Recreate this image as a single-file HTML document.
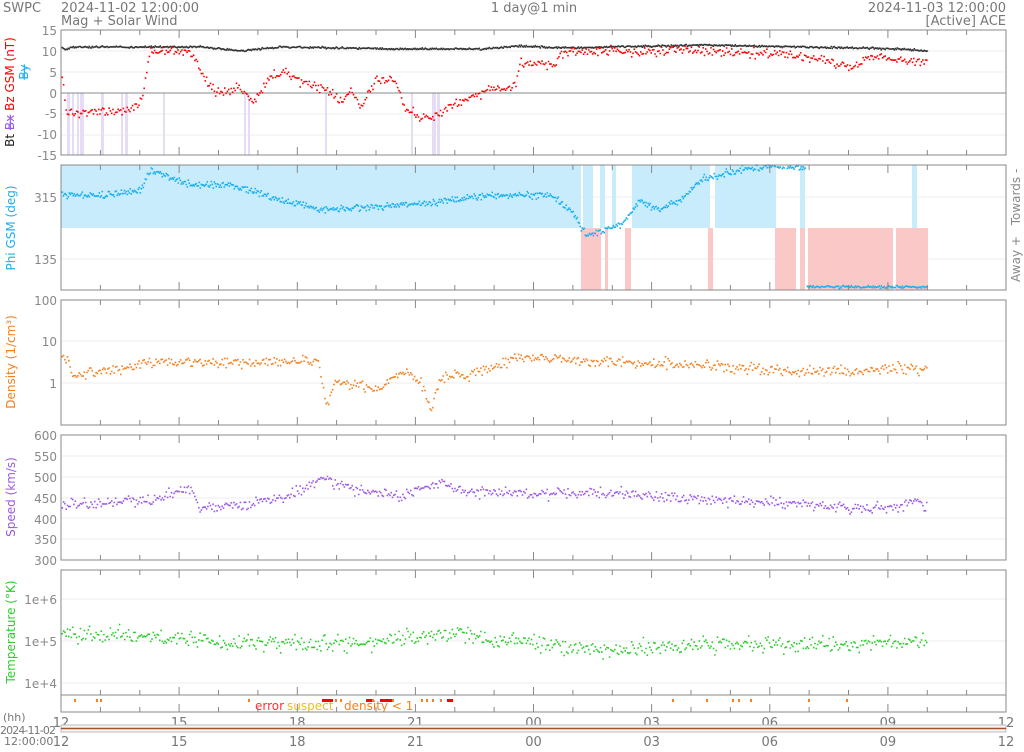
<!DOCTYPE html>
<html><head><meta charset="utf-8"><style>
body{margin:0;background:#fff;width:1024px;height:748px;overflow:hidden;font-family:"DejaVu Sans","Liberation Sans",sans-serif}
svg text{font-family:"DejaVu Sans","Liberation Sans",sans-serif}
</style></head><body>
<svg id="s" width="1024" height="748" xmlns="http://www.w3.org/2000/svg">
<g font-size="13" fill="#777">
<text x="3" y="12">SWPC</text>
<text x="61" y="12">2024-11-02 12:00:00</text>
<text x="61" y="25">Mag + Solar Wind</text>
<text x="534" y="12" text-anchor="middle">1 day@1 min</text>
<text x="1006" y="12" text-anchor="end">2024-11-03 12:00:00</text>
<text x="1006" y="25" text-anchor="end">[Active] ACE</text>
</g>
<g font-size="12" fill="#888" text-anchor="end">
<text x="57" y="35">15</text><text x="57" y="56">10</text><text x="57" y="77">5</text><text x="57" y="98">0</text><text x="57" y="118">-5</text><text x="57" y="139">-10</text><text x="57" y="160">-15</text>
<text x="57" y="202">315</text><text x="57" y="264">135</text>
<text x="57" y="305">100</text><text x="57" y="346">10</text><text x="57" y="388">1</text>
<text x="57" y="440">600</text><text x="57" y="461">550</text><text x="57" y="482">500</text><text x="57" y="503">450</text><text x="57" y="524">400</text><text x="57" y="544">350</text><text x="57" y="565">300</text>
<text x="57" y="604">1e+6</text><text x="57" y="646">1e+5</text><text x="57" y="688">1e+4</text>
</g>
<g font-size="12">
<text transform="translate(14,92) rotate(-90)" text-anchor="middle"><tspan fill="#222">Bt </tspan><tspan fill="#9b59e8" text-decoration="line-through">Bx</tspan><tspan fill="#f00"> Bz GSM (nT)</tspan></text>
<text transform="translate(28,72) rotate(-90)" text-anchor="middle" fill="#1ab0f0" text-decoration="line-through">By</text>
<text transform="translate(15,228) rotate(-90)" text-anchor="middle" fill="#1ab0f0">Phi GSM (deg)</text>
<text transform="translate(15,362) rotate(-90)" text-anchor="middle" fill="#f5801e">Density (1/cm³)</text>
<text transform="translate(15,497) rotate(-90)" text-anchor="middle" fill="#9b59e8">Speed (km/s)</text>
<text transform="translate(15,632) rotate(-90)" text-anchor="middle" fill="#2ccc2c">Temperature (°K)</text>
<text transform="translate(1020,197) rotate(-90)" text-anchor="middle" fill="#888">Towards -</text>
<text transform="translate(1020,259) rotate(-90)" text-anchor="middle" fill="#888">Away +</text>
</g>
<g font-size="12">
<text x="255" y="710" fill="#f33">error</text><text x="287" y="710" fill="#e8c020">suspect</text><text x="344" y="710" fill="#f5801e">density &lt; 1</text>
</g>
<g font-size="13" fill="#777" text-anchor="middle" id="xl"></g>
<g font-size="11" fill="#777"><text x="3" y="721">(hh)</text><text x="0" y="734" textLength="56">2024-11-02</text><text x="4" y="745">12:00:00</text></g>
<g id="d"></g>
</svg>
<script>
var s=1;function r(){s=(s*16807)%2147483647;return s/2147483647;}
function n(){return (r()+r()+r()-1.5)*2/1.5;}
var X0=61,X1=1006,W=X1-X0,HP=W/24;
var out=[];
function interp(k,x){for(var i=0;i<k.length-1;i++){if(x>=k[i][0]&&x<=k[i+1][0]){var t=(x-k[i][0])/(k[i+1][0]-k[i][0]);return k[i][1]+t*(k[i+1][1]-k[i][1]);}}return k[k.length-1][1];}
function rect(x,y,w,h,f,o){out.push('<rect x="'+x+'" y="'+y+'" width="'+w+'" height="'+h+'" fill="'+f+'"'+(o?' '+o:'')+'/>');}
function pts(k,col,noise,step,xe,clip,sz,xs){var p='';sz=sz||1.6;for(var x=(xs||X0)+0.5;x<xe;x+=step){var y=interp(k,x)+n()*noise;if(clip&&(y<clip[0]||y>clip[1]))continue;p+='M'+x.toFixed(1)+' '+y.toFixed(1)+'h'+sz;}out.push('<path d="'+p+'" stroke="'+col+'" stroke-width="'+sz+'"/>');}
var panels=[[30,155],[165,290],[300,425],[435,560],[570,695]];
function gl(y){out.push('<line x1="61" x2="1006" y1="'+y+'" y2="'+y+'" stroke="#eee"/>');}
[51,72,114,135].forEach(gl);[197,259].forEach(gl);[341,383].forEach(gl);[456,477,498,518,539].forEach(gl);[599,641,683].forEach(gl);
[[67,3],[72,2],[77,2],[80,4],[101,3],[121,2],[125,3],[163,2],[244,2],[248,2],[325,2],[432,4],[437,3],[411,2]].forEach(function(b){rect(b[0],93,b[1],62,'#e6dcf5');});
rect(61,165,520,63,'#c8ecfb');
[[583,10],[600,5],[612,4],[632,78],[715,61],[800,5],[912,5]].forEach(function(b){rect(b[0],165,b[1],63,'#c8ecfb');});
[[581,20],[605,3],[625,6],[708,5],[775,30],[808,120]].forEach(function(b){rect(b[0],228,b[1],62,'#fbc8c8');});
rect(796,228,4,62,'#fff');rect(806,228,2,62,'#fff');rect(893,228,3,62,'#fff');
out.push('<line x1="61" x2="1006" y1="93" y2="93" stroke="#888"/>');
pts([[61,48],[66,50],[70,47],[200,47],[240,51],[280,47],[400,49],[480,49],[520,46],[560,48],[700,45],[800,47],[900,49],[925,51]],'#333',0.7,1,927);
pts([[61,72],[66,114],[80,114],[100,111],[130,111],[140,100],[145,80],[150,52],[190,52],[200,72],[215,93],[240,89],[250,101],[260,93],[270,76],[285,72],[300,82],[310,86],[325,89],[340,101],[350,89],[360,109],[375,80],[395,80],[405,110],[430,118],[445,110],[460,101],[490,89],[515,85],[518,64],[555,64],[560,52],[700,51],[780,54],[820,60],[850,68],[870,56],[900,60],[925,63]],'#f00',3.5,1.3,927);
pts([[61,195],[100,195],[140,190],[150,170],[190,185],[230,185],[280,200],[320,210],[400,205],[500,195],[550,195],[570,210],[585,235],[620,225],[640,200],[660,210],[680,200],[700,180],[740,170],[770,166],[800,168]],'#1ab0f0',2.5,1,805,[165,290]);
pts([[806,287],[925,287]],'#1ab0f0',1,1,927,null,1.6,806);
pts([[61,355],[68,360],[72,375],[100,372],[150,362],[250,362],[318,362],[325,405],[335,380],[380,390],[400,370],[420,380],[430,412],[440,378],[480,372],[520,357],[600,362],[700,364],[760,370],[800,372],[900,368],[925,370]],'#f5801e',4,1.3,927);
pts([[61,505],[150,500],[190,488],[200,508],[250,505],[300,492],[320,477],[350,490],[400,497],[440,482],[460,492],[540,494],[600,492],[700,500],[800,505],[850,508],[900,507],[910,500],[925,507]],'#9b59e8',4,1.3,927);
pts([[61,633],[150,637],[250,642],[350,645],[450,633],[500,640],[600,650],[700,645],[850,645],[910,640],[925,643]],'#2ccc2c',6,1.3,927);
var fl=[[74,'#f5801e'],[96,'#f5801e'],[100,'#f5801e'],[248,'#f5801e'],[322,'#f00'],[327,'#f00'],[335,'#f5801e'],[340,'#f5801e'],[366,'#f00'],[372,'#f5801e'],[380,'#f00'],[386,'#f00'],[392,'#f5801e'],[421,'#f5801e'],[426,'#f5801e'],[432,'#f5801e'],[440,'#f5801e'],[447,'#f00'],[672,'#f5801e'],[706,'#f5801e'],[732,'#f5801e'],[738,'#f5801e'],[750,'#f5801e'],[808,'#f5801e'],[846,'#f5801e']];
fl.forEach(function(f){rect(f[0],699,f[1]=='#f00'?6:2,3,f[1]);});
panels.forEach(function(p){out.push('<rect x="61" y="'+p[0]+'" width="945" height="'+(p[1]-p[0])+'" fill="none" stroke="#888"/>');for(var h=0;h<=24;h++){var x=(X0+h*HP).toFixed(1),L=h%3==0?8:5;out.push('<line x1="'+x+'" x2="'+x+'" y1="'+p[0]+'" y2="'+(p[0]+L)+'" stroke="#888"/><line x1="'+x+'" x2="'+x+'" y1="'+p[1]+'" y2="'+(p[1]-L)+'" stroke="#888"/>');}});
out.push('<rect x="61" y="695" width="945" height="17" fill="none" stroke="#888"/>');
for(var h=0;h<=24;h++){var x=(X0+h*HP).toFixed(1);out.push('<line x1="'+x+'" x2="'+x+'" y1="712" y2="'+(h%3==0?704:707)+'" stroke="#888"/>');}
out.push('<rect x="61" y="725" width="945" height="7" fill="#f4f4f4" stroke="#bbb"/><line x1="61" x2="1006" y1="728.5" y2="728.5" stroke="#a0522d" stroke-width="1.5"/>');
document.getElementById('d').innerHTML=out.join('');
var lab=['12','15','18','21','00','03','06','09','12'],xl='';
lab.forEach(function(l,i){var x=(X0+i*3*HP).toFixed(1);xl+='<text x="'+x+'" y="727">'+l+'</text><text x="'+x+'" y="746">'+l+'</text>';});
document.getElementById('xl').innerHTML=xl;
</script>
</body></html>
